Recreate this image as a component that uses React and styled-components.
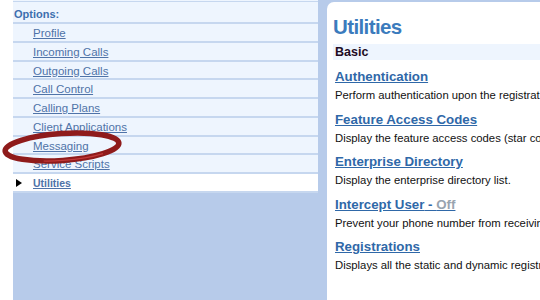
import React from 'react';
import styled, { createGlobalStyle } from 'styled-components';

const GlobalStyle = createGlobalStyle`
  body {
    margin: 0;
    background: #fff;
    font-family: "Liberation Sans", Arial, sans-serif;
  }
`;

const Page = styled.div`
  position: relative;
  display: flex;
  width: 540px;
  height: 300px;
  padding-left: 13px;
  box-sizing: border-box;
  overflow: hidden;
`;

const Frame = styled.div`
  flex: 1;
  display: flex;
  gap: 9px;
  background: #b7cbea;
`;

const Sidebar = styled.ul`
  list-style: none;
  margin: 0;
  padding: 0;
  width: 305px;
  align-self: flex-start;
  background: #eef5fe;
  border-top: 1px solid #eef5fe;
`;

const Heading = styled.li`
  height: 20px;
  line-height: 25px;
  padding-left: 1px;
  border-top: 1px solid #c6d7ef;
  border-bottom: 2px solid #c6d7ef;
  color: #3d6fae;
  font-size: 11px;
  font-weight: bold;
`;

const Row = styled.li`
  position: relative;
  height: 16.75px;
  line-height: 18px;
  padding-left: 20px;
  background: ${(p) => (p.$active ? '#fff' : '#eef5fe')};
  border-bottom: 2px solid #c6d7ef;
  font-size: ${(p) => (p.$active ? '10.5px' : '11.5px')};
  font-weight: ${(p) => (p.$active ? 'bold' : 'normal')};
`;

const Bullet = styled.span`
  position: absolute;
  left: 3px;
  top: 5px;
  width: 0;
  height: 0;
  border-top: 4px solid transparent;
  border-bottom: 4px solid transparent;
  border-left: 6px solid #000;
`;

const NavLink = styled.a`
  color: #4f73a8;
  text-decoration: underline;
`;

const Main = styled.div`
  flex: 1;
  margin-top: 2px;
  padding: 10px 0 0 6px;
  background: #fff;
  border-top-left-radius: 7px;
  white-space: nowrap;
  overflow: hidden;
`;

const Title = styled.h1`
  margin: 0;
  height: 30px;
  line-height: 30px;
  font-size: 20.5px;
  letter-spacing: -0.6px;
  color: #3b7bbd;
`;

const Section = styled.div`
  margin-top: 2px;
  height: 16px;
  line-height: 17px;
  padding-left: 2px;
  background: #eef5fe;
  color: #1e0b24;
  font-size: 12.5px;
  font-weight: bold;
`;

const Items = styled.div`
  display: flex;
  flex-direction: column;
  gap: 5.5px;
  padding: 8px 0 0 2px;
`;

const ItemLink = styled.a`
  display: block;
  height: 18px;
  line-height: 18px;
  font-size: 13.3px;
  font-weight: bold;
  color: #2f68a8;
  text-decoration: underline;
`;

const State = styled.span`
  color: #98a4b0;
  text-decoration: none;
`;

const Desc = styled.div`
  height: 19px;
  line-height: 19px;
  font-size: 11.3px;
  color: #111;
`;

const Annotation = styled.svg`
  position: absolute;
  left: 0;
  top: 125px;
  pointer-events: none;
`;

const options = [
  'Profile',
  'Incoming Calls',
  'Outgoing Calls',
  'Call Control',
  'Calling Plans',
  'Client Applications',
  'Messaging',
  'Service Scripts',
  'Utilities',
];

const items = [
  { name: 'Authentication', desc: 'Perform authentication upon the registration of your phone with the system.' },
  { name: 'Feature Access Codes', desc: 'Display the feature access codes (star codes) available to you.' },
  { name: 'Enterprise Directory', desc: 'Display the enterprise directory list.' },
  { name: 'Intercept User', state: 'Off', desc: 'Prevent your phone number from receiving calls.' },
  { name: 'Registrations', desc: 'Displays all the static and dynamic registrations of your phone.' },
];

export default function App() {
  return (
    <>
      <GlobalStyle />
      <Page>
        <Frame>
          <Sidebar>
            <Heading>Options:</Heading>
            {options.map((o) => (
              <Row key={o} $active={o === 'Utilities'}>
                {o === 'Utilities' && <Bullet />}
                <NavLink href="#">{o}</NavLink>
              </Row>
            ))}
          </Sidebar>
          <Main>
            <Title>Utilities</Title>
            <Section>Basic</Section>
            <Items>
              {items.map((it) => (
                <div key={it.name}>
                  <ItemLink href="#">
                    {it.name}
                    {it.state && (
                      <>
                        {' - '}
                        <State>{it.state}</State>
                      </>
                    )}
                  </ItemLink>
                  <Desc>{it.desc}</Desc>
                </div>
              ))}
            </Items>
          </Main>
        </Frame>
        <Annotation width="130" height="44" viewBox="0 0 130 44">
          <ellipse
            cx="62"
            cy="22"
            rx="57"
            ry="13.5"
            transform="rotate(-4 62 22)"
            fill="none"
            stroke="#8f1b1b"
            strokeWidth="5.5"
          />
          <ellipse
            cx="62"
            cy="22"
            rx="57"
            ry="13.5"
            transform="rotate(-4 62 22)"
            fill="none"
            stroke="#c23a3a"
            strokeWidth="1.2"
            strokeDasharray="60 300"
            strokeDashoffset="-20"
          />
        </Annotation>
      </Page>
    </>
  );
}
